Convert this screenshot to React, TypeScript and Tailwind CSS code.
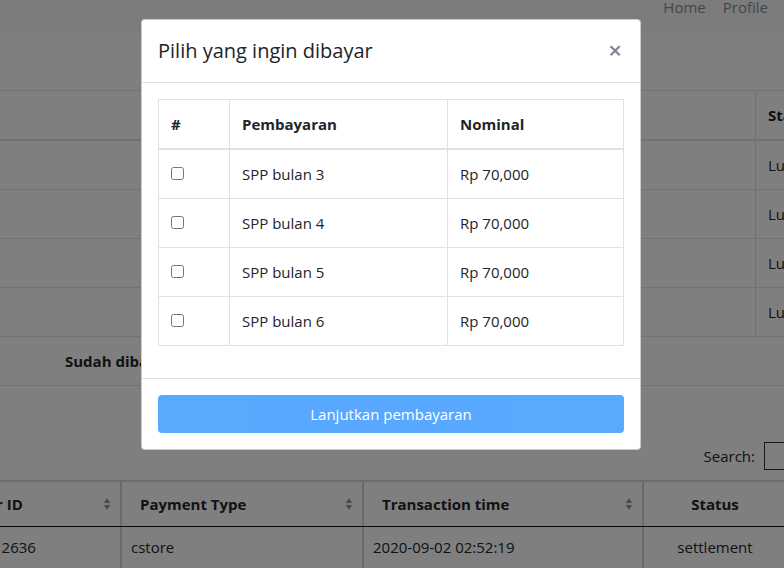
import React from "react";

const rows = ["SPP bulan 3", "SPP bulan 4", "SPP bulan 5", "SPP bulan 6"];

function SortIcon() {
  return (
    <svg width="8" height="14" viewBox="0 0 8 14" className="shrink-0">
      <path d="M4 1 L7.5 6 H0.5 Z" fill="#9a9a9a" />
      <path d="M4 13 L7.5 8 H0.5 Z" fill="#9a9a9a" />
    </svg>
  );
}

function Background() {
  return (
    <div className="h-[568px] overflow-hidden bg-white text-[#212529]">
      <nav className="flex h-[33px] justify-end gap-[17px] bg-[#f8f9fa] pr-4">
        <span className="-mt-[5px] leading-6 text-[#8a8b8d]">Home</span>
        <span className="-mt-[5px] leading-6 text-[#8a8b8d]">Profile</span>
      </nav>
      <div className="h-[57px]" />

      <div className="border-t border-[#dee2e6]">
        <div className="flex h-[50px] border-b-2 border-[#dee2e6]">
          <div className="flex-1" />
          <div className="w-[29px] overflow-hidden whitespace-nowrap border-l border-[#dee2e6] pl-3 pt-3 font-bold leading-6">
            Status
          </div>
        </div>
        {rows.map((r) => (
          <div key={r} className="flex h-[49px] border-b border-[#dee2e6]">
            <div className="flex-1" />
            <div className="w-[29px] overflow-hidden whitespace-nowrap border-l border-[#dee2e6] pl-3 pt-3 leading-6">
              Lunas
            </div>
          </div>
        ))}
        <div className="flex h-[49px] items-center border-b border-[#dee2e6] pl-[65px] font-bold">
          Sudah dibayar
        </div>
      </div>

      <div className="mt-[56px] flex h-[28px] items-center justify-end overflow-hidden">
        <span className="leading-6">Search:</span>
        <div className="ml-[9px] -mr-[20px] h-[28px] w-[40px] shrink-0 border border-[#333]" />
      </div>

      <div className="mt-[10px] w-[786px] border-t-2 border-[#dcdcdc]">
        <div className="flex h-[45px] border-b border-[#111] font-bold">
          <div className="flex w-[122px] items-center overflow-hidden whitespace-nowrap border-r-2 border-[#d4d4d4] pr-[9px]">
            <span className="-ml-[41px] flex-1">Order ID</span>
            <SortIcon />
          </div>
          <div className="flex w-[242px] items-center border-r-2 border-[#d4d4d4] pl-[18px] pr-[9px]">
            <span className="flex-1">Payment Type</span>
            <SortIcon />
          </div>
          <div className="flex w-[280px] items-center border-r-2 border-[#d4d4d4] pl-[18px] pr-[9px]">
            <span className="flex-1">Transaction time</span>
            <SortIcon />
          </div>
          <div className="flex w-[142px] items-center justify-center">Status</div>
        </div>
        <div className="flex h-[46px]">
          <div className="flex w-[122px] items-start overflow-hidden whitespace-nowrap border-r-2 border-[#d4d4d4] pt-[9px]">
            <span className="-ml-[7px]">12636</span>
          </div>
          <div className="flex w-[242px] items-start border-r-2 border-[#d4d4d4] pl-[9px] pt-[9px]">cstore</div>
          <div className="flex w-[280px] items-start border-r-2 border-[#d4d4d4] pl-[9px] pt-[9px]">
            2020-09-02 02:52:19
          </div>
          <div className="flex w-[142px] items-start justify-center pt-[9px]">settlement</div>
        </div>
      </div>
    </div>
  );
}

export default function App() {
  return (
    <div className="relative h-[568px] w-[784px] overflow-hidden font-['Open_Sans',sans-serif] text-[15px]">
      <Background />

      <div className="absolute inset-0 flex bg-black/50 pl-[141px] pt-[19px]">
        <div className="h-fit w-[500px] rounded border border-black/20 bg-white text-[#212529]">
          <div className="flex items-center justify-between border-b border-[#dee2e6] px-4 py-4">
            <h5 className="text-xl leading-[30px]">Pilih yang ingin dibayar</h5>
            <span className="-mt-[3px] mr-[2px] text-2xl font-semibold leading-none text-black/50">×</span>
          </div>

          <div className="p-4">
            <table className="mb-4 w-full border-collapse">
              <thead>
                <tr className="text-left">
                  <th className="w-[71px] border border-b-2 border-[#dee2e6] p-3 font-bold leading-6">#</th>
                  <th className="w-[218px] border border-b-2 border-[#dee2e6] p-3 font-bold leading-6">Pembayaran</th>
                  <th className="border border-b-2 border-[#dee2e6] p-3 font-bold leading-6">Nominal</th>
                </tr>
              </thead>
              <tbody>
                {rows.map((r) => (
                  <tr key={r}>
                    <td className="border border-[#dee2e6] p-3 leading-6">
                      <input type="checkbox" className="h-[13px] w-[13px] align-[0px]" />
                    </td>
                    <td className="border border-[#dee2e6] p-3 leading-6">{r}</td>
                    <td className="border border-[#dee2e6] p-3 leading-6">Rp 70,000</td>
                  </tr>
                ))}
              </tbody>
            </table>
          </div>

          <div className="border-t border-[#dee2e6] p-4">
            <button
              type="button"
              className="h-[38px] w-full rounded bg-[#007bff] leading-6 text-white opacity-65"
            >
              Lanjutkan pembayaran
            </button>
          </div>
        </div>
      </div>
    </div>
  );
}
